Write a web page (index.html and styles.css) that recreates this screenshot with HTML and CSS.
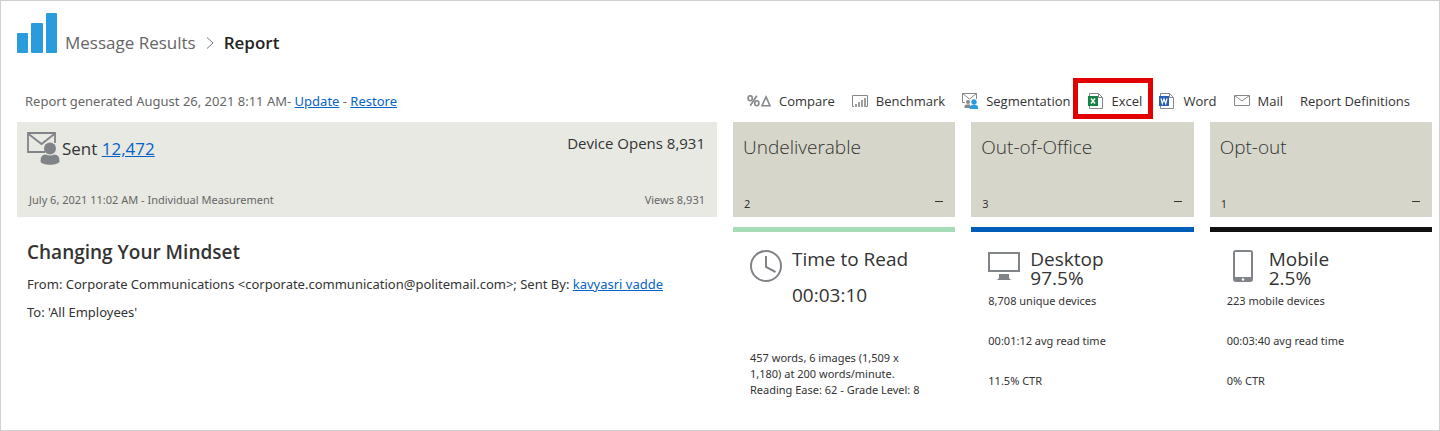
FILE: index.html
```
<!DOCTYPE html>
<html lang="en">
<head>
    <meta charset="UTF-8">
    <meta name="viewport" content="width=device-width, initial-scale=1">
    <title>Message Results - Report</title>
    <link rel="stylesheet" href="styles.css">
</head>
<body>
    <div class="page">
        <header class="header">
            <svg class="logo" viewBox="0 0 40 40" fill="#2a9bdb">
                <rect x="0" y="20" width="11" height="20" rx="1"/>
                <rect x="14" y="10" width="12" height="30" rx="1"/>
                <rect x="29" y="0" width="11" height="40" rx="1"/>
            </svg>
            <nav class="breadcrumb">
                <span>Message Results</span>
                <svg class="chevron" viewBox="0 0 8 12" fill="none" stroke="#777"><path d="M1 .5 7 6 1 11.5"/></svg>
                <h1>Report</h1>
            </nav>
        </header>

        <div class="columns bar">
            <p class="generated">Report generated August 26, 2021 8:11 AM- <a href="#">Update</a> - <a href="#">Restore</a></p>
            <div class="toolbar">
                <button type="button">
                    <svg width="24" height="16" viewBox="0 0 24 16" fill="none" stroke="#85878a" stroke-width="1.6">
                        <ellipse cx="3.2" cy="5.2" rx="2.1" ry="2.5"/>
                        <ellipse cx="9.8" cy="10.2" rx="2.1" ry="2.5"/>
                        <path d="M9.8 2.7 3.2 12.7M19 4l-4 8.7h8z"/>
                    </svg>
                    Compare
                </button>
                <button type="button">
                    <svg width="16" height="16" viewBox="0 0 16 16" fill="none" stroke="#85878a">
                        <path d="M2 13.5H.5v-11h15v11H14"/>
                        <path d="M4 11v3M7 9v5M10 7v7M13 5v9" stroke-width="1.6"/>
                    </svg>
                    Benchmark
                </button>
                <button type="button">
                    <svg width="16" height="16" viewBox="0 0 16 16">
                        <path d="M3 9.5H.5v-9h14V6M.5.5l7 5.5 7-5.5" fill="none" stroke="#85878a"/>
                        <circle cx="6" cy="9" r="2" fill="#85878a"/>
                        <path d="M2.5 15v-1.5q0-2 2-2H8V15z" fill="#85878a"/>
                        <circle cx="12" cy="9" r="2.7" fill="#2a9bdb"/>
                        <path d="M7.7 16v-1.5q0-2.5 2.6-2.5h3.2q2.5 0 2.5 2.5V16z" fill="#2a9bdb"/>
                    </svg>
                    Segmentation
                </button>
                <button type="button" class="marked">
                    <svg width="16" height="16" viewBox="0 0 16 16">
                        <path d="M1.5.5h9l4 4v11h-13zM10.5.5v4h4" fill="#fff" stroke="#85878a"/>
                        <path d="M0 3h10v10H0z" fill="#168243"/>
                        <path d="m3 5.5 4 5m0-5-4 5" stroke="#fff" stroke-width="1.4"/>
                    </svg>
                    Excel
                </button>
                <button type="button">
                    <svg width="16" height="16" viewBox="0 0 16 16">
                        <path d="M1.5.5h9l4 4v11h-13zM10.5.5v4h4" fill="#fff" stroke="#85878a"/>
                        <path d="M0 3h10v10H0z" fill="#2b5eb5"/>
                        <path d="m2 5.5 1.3 5L5 6l1.7 4.5 1.300-5" fill="none" stroke="#fff" stroke-width="1.2"/>
                    </svg>
                    Word
                </button>
                <button type="button">
                    <svg width="16" height="16" viewBox="0 0 16 16" fill="none" stroke="#85878a">
                        <path d="M.5 2.5h15v10H.5zM.5 2.5 8 8l7.5-5.5"/>
                    </svg>
                    Mail
                </button>
                <button type="button">Report Definitions</button>
            </div>
        </div>

        <main class="columns">
            <section>
                <div class="sent">
                    <div class="sent-row">
                        <svg width="33" height="33" viewBox="0 0 33 33">
                            <path d="M18 20H1V1h27v10M1 1.5 14.5 12 28 1.5" fill="none" stroke="#808388" stroke-width="1.8"/>
                            <circle cx="23" cy="16.5" r="6" fill="#808388"/>
                            <path d="M13.5 29q0-6.5 5-6.5 4.5 2 9 0 5 0 5 6.5c0 5-19 5-19 0z" fill="#808388"/>
                        </svg>
                        <span class="sent-total">Sent <a href="#">12,472</a></span>
                        <span class="opens">Device Opens 8,931</span>
                    </div>
                    <div class="sent-foot">
                        <span>July 6, 2021 11:02 AM - Individual Measurement</span>
                        <span>Views 8,931</span>
                    </div>
                </div>
                <div class="message">
                    <h2>Changing Your Mindset</h2>
                    <p>From: Corporate Communications &lt;corporate.communication@politemail.com&gt;; Sent By: <a href="#">kavyasri vadde</a></p>
                    <p>To: 'All Employees'</p>
                </div>
            </section>

            <div class="stats">
                <section>
                    <div class="tile">
                        <h3>Undeliverable</h3>
                        <div class="tile-foot"><span>2</span><span class="dash"></span></div>
                    </div>
                    <div class="metric green">
                        <div class="metric-head read">
                            <svg width="32" height="32" viewBox="0 0 32 32" fill="none" stroke="#808388" stroke-width="2">
                                <circle cx="16" cy="16" r="15"/>
                                <path d="M16 6v11l9.5 5"/>
                            </svg>
                            <div>
                                <h4>Time to Read</h4>
                                <div class="value">00:03:10</div>
                            </div>
                        </div>
                        <p class="reading">457 words, 6 images (1,509 x 1,180) at 200 words/minute. Reading Ease: 62 - Grade Level: 8</p>
                    </div>
                </section>
                <section>
                    <div class="tile">
                        <h3>Out-of-Office</h3>
                        <div class="tile-foot"><span>3</span><span class="dash"></span></div>
                    </div>
                    <div class="metric blue">
                        <div class="metric-head">
                            <svg width="32" height="32" viewBox="0 0 32 32">
                                <path d="M1 3h30v18H1z" fill="none" stroke="#808388" stroke-width="2"/>
                                <path d="M11 24h10v4l2 2H9l2-2z" fill="#808388"/>
                            </svg>
                            <div>
                                <h4>Desktop</h4>
                                <div class="value">97.5%</div>
                            </div>
                        </div>
                        <p>8,708 unique devices</p>
                        <p>00:01:12 avg read time</p>
                        <p>11.5% CTR</p>
                    </div>
                </section>
                <section>
                    <div class="tile">
                        <h3>Opt-out</h3>
                        <div class="tile-foot"><span>1</span><span class="dash"></span></div>
                    </div>
                    <div class="metric black">
                        <div class="metric-head">
                            <svg width="32" height="32" viewBox="0 0 32 32">
                                <path d="M9 0h14q3 0 3 3v26q0 3-3 3H9q-3 0-3-3V3q0-3 3-3zM8 2v25h16V2z" fill="#808388" fill-rule="evenodd"/>
                                <circle cx="16" cy="29.5" r="1.2" fill="#fff"/>
                            </svg>
                            <div>
                                <h4>Mobile</h4>
                                <div class="value">2.5%</div>
                            </div>
                        </div>
                        <p>223 mobile devices</p>
                        <p>00:03:40 avg read time</p>
                        <p>0% CTR</p>
                    </div>
                </section>
            </div>
        </main>
    </div>
</body>
</html>
```
FILE: styles.css
```
*{
    box-sizing: border-box;
}
body{
    margin: 0;
    font-family: "Noto Sans", "Open Sans", sans-serif;
    font-size: 13px;
    line-height: 20px;
    color: #333;
}
h1, h2, h3, h4, p{
    margin: 0;
    font-weight: normal;
}
a{
    color: #0563c8;
}
svg{
    flex: none;
    display: block;
}
.page{
    min-height: 100vh;
    padding: 12px 7px 16px 16px;
    border: 1px solid #d0d0d0;
}
.header{
    display: flex;
    gap: 8px;
    height: 60px;
    font-family: "Open Sans", sans-serif;
}
.logo{
    width: 40px;
    height: 40px;
}
.breadcrumb{
    display: flex;
    align-items: center;
    gap: 10px;
    height: 60px;
    font-size: 17px;
    color: #666;
}
.chevron{
    width: 8px;
    height: 12px;
}
.breadcrumb h1{
    font-size: 17px;
    font-weight: 600;
    color: #222;
}
.columns{
    display: grid;
    grid-template-columns: 700fr 699fr;
    gap: 16px;
}
.bar{
    align-items: center;
    height: 49px;
    padding-top: 6px;
}
.generated{
    padding-left: 8px;
    color: #666;
}
.toolbar{
    display: flex;
    justify-content: space-between;
    padding: 0 22px 0 14px;
    font-family: "Open Sans", sans-serif;
}
.toolbar button{
    display: flex;
    align-items: center;
    gap: 8px;
    padding: 0;
    border: none;
    background: none;
    font: inherit;
    color: #333;
    white-space: nowrap;
    cursor: pointer;
}
.toolbar .marked{
    position: relative;
}
.marked::after{
    content: "";
    position: absolute;
    inset: -13px -11px -8px -15px;
    border: 5px solid #e30000;
}
.sent{
    display: flex;
    flex-direction: column;
    justify-content: space-between;
    height: 95px;
    padding: 10px 12px 8px 10px;
    background: #e8e9e3;
}
.sent-row{
    display: flex;
    gap: 2px;
    font-family: "Open Sans", sans-serif;
}
.sent-total{
    font-size: 17px;
    line-height: 33px;
}
.opens{
    margin-left: auto;
    font-size: 15px;
    line-height: 22px;
}
.sent-foot{
    display: flex;
    justify-content: space-between;
    padding-left: 2px;
    font-size: 11px;
    line-height: 18px;
    color: #666;
}
.message{
    padding: 21px 10px 0;
}
.message h2{
    margin-bottom: 8px;
    font-family: "Open Sans", sans-serif;
    font-size: 19px;
    font-weight: 600;
    line-height: 28px;
}
.message p{
    line-height: 20px;
    margin-bottom: 8px;
}
.stats{
    display: grid;
    grid-template-columns: repeat(3, 1fr);
    gap: 16px;
}
.tile{
    display: flex;
    flex-direction: column;
    justify-content: space-between;
    height: 95px;
    margin-bottom: 10px;
    padding: 10px 12px 4px 10px;
    background: #d6d7ca;
}
.tile h3{
    font-family: "Open Sans", sans-serif;
    font-size: 19px;
    font-weight: 300;
    line-height: 30px;
}
.tile-foot{
    display: flex;
    justify-content: space-between;
    align-items: center;
    padding-left: 1px;
    font-size: 11px;
    line-height: 18px;
}
.dash{
    width: 8px;
    height: 1px;
    margin-bottom: 6px;
    background: #333;
}
.metric{
    padding: 18px 17px 0;
    border-top: 5px solid;
    font-size: 11px;
    line-height: 16px;
}
.green{
    border-color: #a6dbb8;
}
.blue{
    border-color: #005eb8;
}
.black{
    border-color: #111;
}
.metric-head{
    display: flex;
    gap: 10px;
    margin-bottom: 5px;
    font-family: "Open Sans", sans-serif;
    font-size: 19px;
    line-height: 19px;
}
.metric h4{
    font-size: 19px;
}
.read .value{
    padding-top: 17px;
}
.metric p{
    margin-bottom: 24px;
}
.metric p:last-child{
    margin-bottom: 0;
}
.metric .reading{
    margin-top: 45px;
    padding-right: 10px;
}
```
